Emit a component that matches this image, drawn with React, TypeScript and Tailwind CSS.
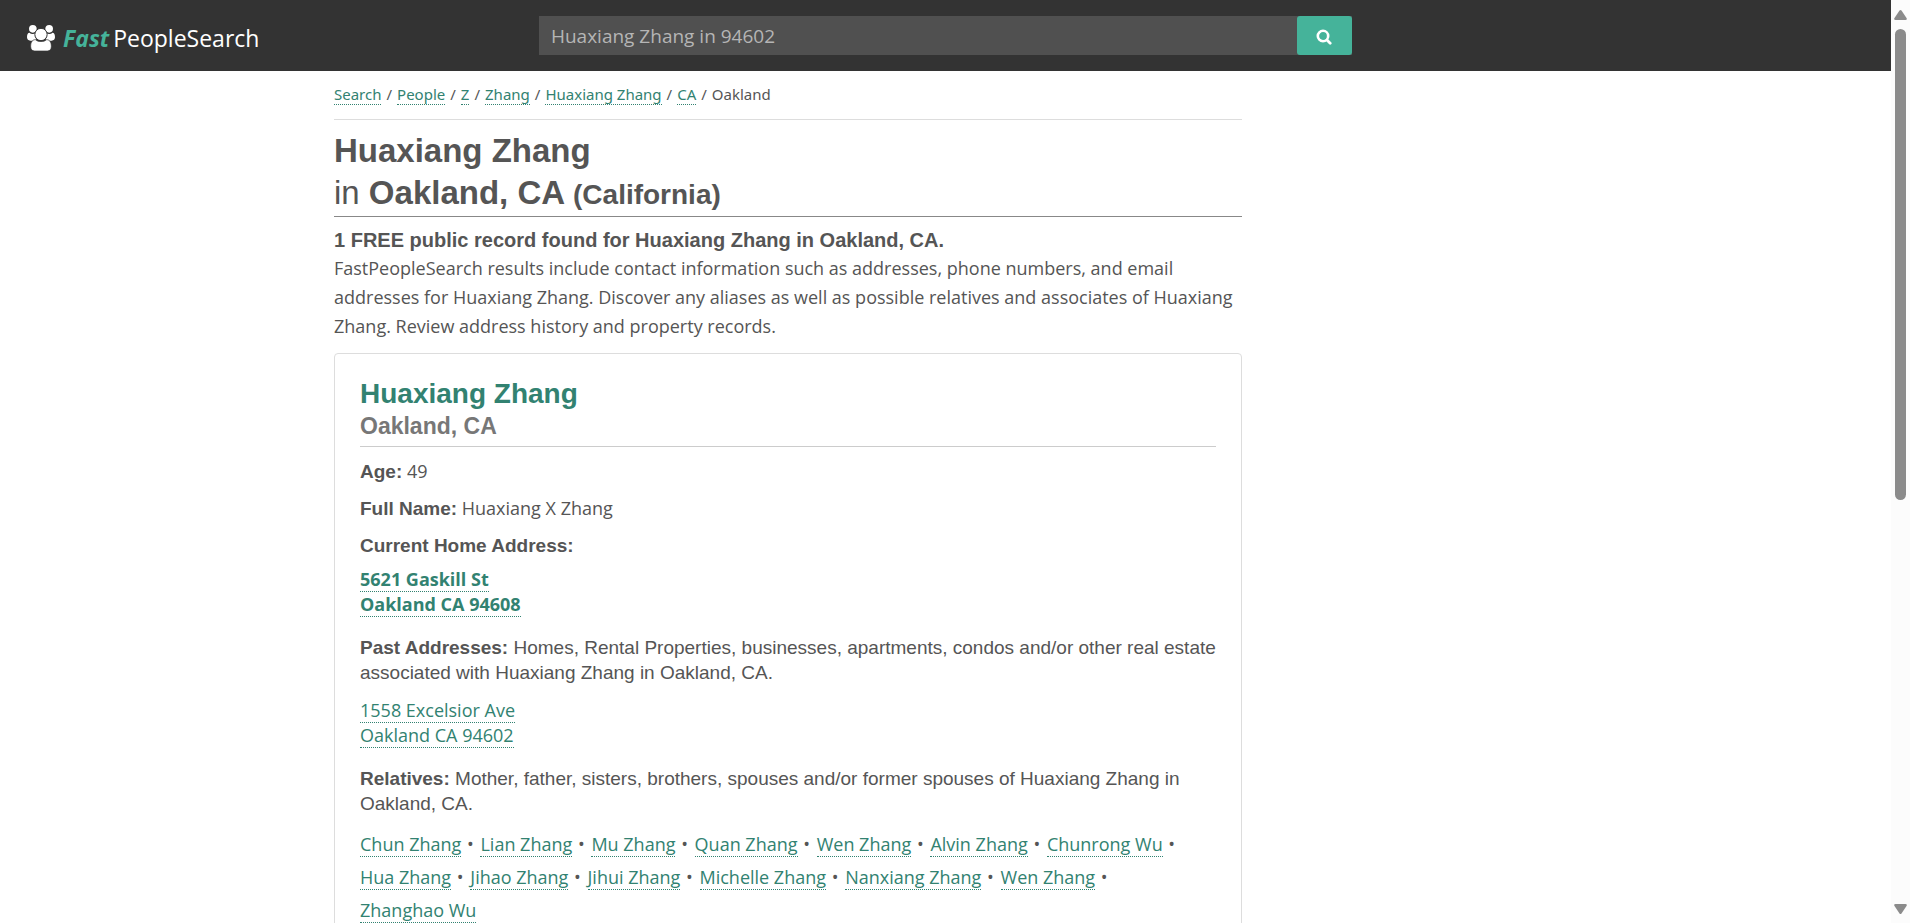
import { Fragment, type ReactNode } from 'react';

const crumbs = ['Search', 'People', 'Z', 'Zhang', 'Huaxiang Zhang', 'CA'];

const relatives = [
  'Chun Zhang',
  'Lian Zhang',
  'Mu Zhang',
  'Quan Zhang',
  'Wen Zhang',
  'Alvin Zhang',
  'Chunrong Wu',
  'Hua Zhang',
  'Jihao Zhang',
  'Jihui Zhang',
  'Michelle Zhang',
  'Nanxiang Zhang',
  'Wen Zhang',
  'Zhanghao Wu',
];

function DottedLink({ children }: { children: ReactNode }) {
  return (
    <a href="#" className="border-b border-dotted border-[#328271] text-[#328271]">
      {children}
    </a>
  );
}

function PeopleIcon() {
  return (
    <svg viewBox="0 0 84 78" className="h-[26px] w-7 fill-white" aria-hidden="true">
      <circle cx="17.500" cy="11.500" r="11.500" />
      <circle cx="66.500" cy="11.500" r="11.500" />
      <path d="M8 23c3 3 6 4 10 4 3 0 5-1 7-2-1 7 0 13 3 18-2 1-4 3-5 4H10c-6 0-10-4-10-10 0-8 2-14 8-14z" />
      <path d="M76 23c-3 3-6 4-10 4-3 0-5-1-7-2 1 7 0 13-3 18 2 1 4 3 5 4h13c6 0 10-4 10-10 0-8-2-14-8-14z" />
      <path
        d="M25 44c5 4 10 5.500 17 5.500S54 48 59 44c10 0 14 9 14 20 0 9-4 14-12 14H23c-8 0-12-5-12-14 0-11 4-20 14-20z"
        stroke="#333"
        strokeWidth="2"
      />
      <circle cx="42" cy="28.500" r="18.500" stroke="#333" strokeWidth="3" />
    </svg>
  );
}

function Header() {
  return (
    <header className="grid grid-cols-[1fr_43%_1fr] items-center bg-[#333] py-4">
      <a href="#" className="flex items-center gap-2 pt-1 pl-[27px]">
        <PeopleIcon />
        <span className="flex gap-1 text-[23px] leading-8 text-white">
          <span className="font-bold text-[#45b39a] italic">Fast</span>
          <span>PeopleSearch</span>
        </span>
      </a>
      <form className="flex h-[39px] bg-[#505050]" onSubmit={(e) => e.preventDefault()}>
        <input
          type="text"
          aria-label="Search name and location"
          defaultValue="Huaxiang Zhang in 94602"
          className="min-w-0 flex-1 bg-transparent px-3 pt-0.5 text-[19px] text-[#b5b5b5] outline-none"
        />
        <button
          type="submit"
          aria-label="Search"
          className="flex w-[55px] items-center justify-center rounded-[3px] bg-[#45b39a] pt-0.5 pr-0.5"
        >
          <svg viewBox="0 0 16 16" className="size-4 fill-none stroke-white" aria-hidden="true">
            <circle cx="7" cy="7" r="5.200" strokeWidth="2.600" />
            <path d="M11 11l3.200 3.200" strokeWidth="2.800" strokeLinecap="round" />
          </svg>
        </button>
      </form>
    </header>
  );
}

function Label({ children }: { children: ReactNode }) {
  return (
    <strong className="font-['Liberation_Sans',Arial,sans-serif] text-[19px] leading-none font-bold">{children}</strong>
  );
}

function PersonCard() {
  return (
    <article className="mt-3 rounded border border-[#ddd] px-[25px] pt-[22px] pb-12">
      <h2 className="border-b border-[#ccc] pb-[5px] font-['Liberation_Sans',Arial,sans-serif] font-bold">
        <a href="#" className="block text-[28px] leading-[35px] text-[#328271]">
          Huaxiang Zhang
        </a>
        <span className="block text-[23px] leading-[30px] text-[#777]">Oakland, CA</span>
      </h2>
      <div className="mt-[11px] flex flex-col gap-[11px] text-[18px] leading-[26px]">
        <p>
          <Label>Age:</Label> 49
        </p>
        <p>
          <Label>Full Name:</Label> Huaxiang X Zhang
        </p>
        <h3>
          <Label>Current Home Address:</Label>
        </h3>
      </div>
      <p className="mt-[9px] text-[18px] leading-[25px] font-bold">
        <DottedLink>
          5621 Gaskill St
          <br />
          Oakland CA 94608
        </DottedLink>
      </p>
      <p className="mt-[18px] font-['Liberation_Sans',Arial,sans-serif] text-[19px] leading-[25px]">
        <Label>Past Addresses:</Label> Homes, Rental Properties, businesses, apartments, condos and/or other real
        estate associated with Huaxiang Zhang in Oakland, CA.
      </p>
      <p className="mt-[13px] text-[18px] leading-[25px]">
        <DottedLink>
          1558 Excelsior Ave
          <br />
          Oakland CA 94602
        </DottedLink>
      </p>
      <p className="mt-[18px] font-['Liberation_Sans',Arial,sans-serif] text-[19px] leading-[25px]">
        <Label>Relatives:</Label> Mother, father, sisters, brothers, spouses and/or former spouses of Huaxiang Zhang in
        Oakland, CA.
      </p>
      <p className="mt-3 text-[18px] leading-[33px]">
        {relatives.map((name, i) => (
          <Fragment key={i}>
            <span className="whitespace-nowrap">
              <DottedLink>{name}</DottedLink>
              {i < relatives.length - 1 && <span className="mr-0.5 ml-px"> •</span>}
            </span>{' '}
          </Fragment>
        ))}
      </p>
    </article>
  );
}

function ScrollBar() {
  return (
    <aside className="flex w-[19px] shrink-0 flex-col items-center bg-[#fcfcfc] pt-[10px] pb-[9px]" aria-hidden="true">
      <svg viewBox="0 0 13 10" className="mb-[9px] h-[10px] w-[13px] shrink-0 fill-[#8b8b8b]">
        <path d="M5.500.600q1-1 2 0l5 7.400q1 2-1 2h-10q-2 0-1-2z" />
      </svg>
      <div className="w-[11px] flex-[471] rounded-full bg-[#8b8b8b]" />
      <div className="flex-[404]" />
      <svg viewBox="0 0 13 10" className="h-[10px] w-[13px] shrink-0 fill-[#8b8b8b]">
        <path d="M5.500 9.400q1 1 2 0l5-7.400q1-2-1-2h-10q-2 0-1 2z" />
      </svg>
    </aside>
  );
}

export default function App() {
  return (
    <div className="flex h-screen overflow-hidden bg-white font-['Open_Sans','Noto_Sans',sans-serif] text-[#555]">
      <div className="min-w-0 flex-1 overflow-hidden">
        <Header />
        <div className="mx-auto grid max-w-[1223px] grid-cols-[minmax(0,908px)_1fr]">
          <main>
            <nav
              aria-label="Breadcrumb"
              className="border-b border-[#ddd] pt-[11px] pb-[13px] font-['Noto_Sans','Open_Sans',sans-serif] text-[15px] leading-6"
            >
              {crumbs.map((crumb) => (
                <Fragment key={crumb}>
                  <DottedLink>{crumb}</DottedLink>
                  <span className="px-[5px]">/</span>
                </Fragment>
              ))}
              Oakland
            </nav>
            <h1 className="mt-[10px] border-b border-[#888] pb-0.5 font-['Liberation_Sans',Arial,sans-serif] text-[33px] leading-[42px] font-bold">
              Huaxiang Zhang
              <br />
              <span className="font-normal">in</span> Oakland, CA{' '}
              <span className="text-[28px] leading-none">(California)</span>
            </h1>
            <h2 className="mt-[9px] font-['Liberation_Sans',Arial,sans-serif] text-[20px] leading-7 font-bold">
              1 FREE public record found for Huaxiang Zhang in Oakland, CA.
            </h2>
            <p className="text-[18px] leading-[29px]">
              FastPeopleSearch results include contact information such as addresses, phone numbers, and email addresses
              for Huaxiang Zhang. Discover any aliases as well as possible relatives and associates of Huaxiang Zhang.
              Review address history and property records.
            </p>
            <PersonCard />
          </main>
        </div>
      </div>
      <ScrollBar />
    </div>
  );
}
